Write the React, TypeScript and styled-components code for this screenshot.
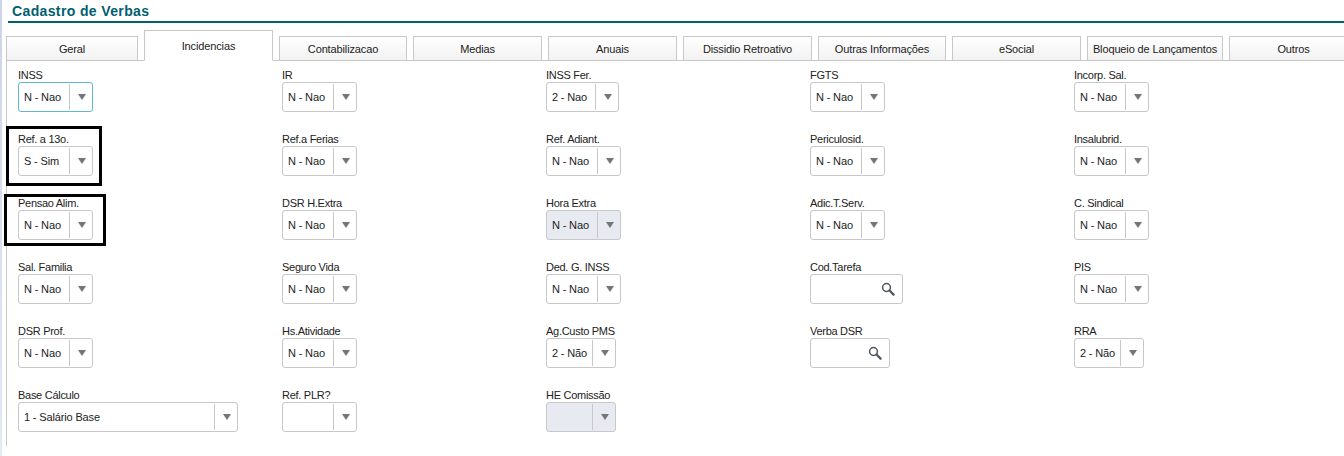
import React from 'react';
import styled, { createGlobalStyle } from 'styled-components';

const GlobalStyle = createGlobalStyle`
  html, body {
    margin: 0;
    padding: 0;
    background: #fff;
    overflow: hidden;
  }
  body {
    font-family: 'Liberation Sans', Arial, sans-serif;
    font-size: 11px;
    color: #222;
  }
`;

type FieldData = {
  label: string;
  value?: string;
  width?: number;
  disabled?: boolean;
  focused?: boolean;
  lookup?: boolean;
  mark?: 'first' | 'second';
};

const TABS = [
  { name: 'Geral', width: 132 },
  { name: 'Incidencias', width: 129, active: true },
  { name: 'Contabilizacao', width: 128 },
  { name: 'Medias', width: 129 },
  { name: 'Anuais', width: 129 },
  { name: 'Dissidio Retroativo', width: 129 },
  { name: 'Outras Informações', width: 128 },
  { name: 'eSocial', width: 129 },
  { name: 'Bloqueio de Lançamentos', width: 136 },
  { name: 'Outros', width: 129 },
];

const FIELDS: FieldData[] = [
  { label: 'INSS', value: 'N - Nao', focused: true },
  { label: 'IR', value: 'N - Nao' },
  { label: 'INSS Fer.', value: '2 - Nao', width: 73 },
  { label: 'FGTS', value: 'N - Nao' },
  { label: 'Incorp. Sal.', value: 'N - Nao' },

  { label: 'Ref. a 13o.', value: 'S - Sim', mark: 'first' },
  { label: 'Ref.a Ferias', value: 'N - Nao' },
  { label: 'Ref. Adiant.', value: 'N - Nao' },
  { label: 'Periculosid.', value: 'N - Nao' },
  { label: 'Insalubrid.', value: 'N - Nao' },

  { label: 'Pensao Alim.', value: 'N - Nao', mark: 'second' },
  { label: 'DSR H.Extra', value: 'N - Nao' },
  { label: 'Hora Extra', value: 'N - Nao', disabled: true },
  { label: 'Adic.T.Serv.', value: 'N - Nao' },
  { label: 'C. Sindical', value: 'N - Nao' },

  { label: 'Sal. Familia', value: 'N - Nao' },
  { label: 'Seguro Vida', value: 'N - Nao' },
  { label: 'Ded. G. INSS', value: 'N - Nao' },
  { label: 'Cod.Tarefa', lookup: true, width: 93 },
  { label: 'PIS', value: 'N - Nao' },

  { label: 'DSR Prof.', value: 'N - Nao' },
  { label: 'Hs.Atividade', value: 'N - Nao' },
  { label: 'Ag.Custo PMS', value: '2 - Não', width: 70 },
  { label: 'Verba DSR', lookup: true, width: 80 },
  { label: 'RRA', value: '2 - Não', width: 70 },

  { label: 'Base Cálculo', value: '1 - Salário Base', width: 220 },
  { label: 'Ref. PLR?', value: '' },
  { label: 'HE Comissão', value: '', width: 70, disabled: true },
];

const SearchIcon = () => (
  <svg width="14" height="14" viewBox="0 0 14 14">
    <circle cx="5.5" cy="5.5" r="3.9" fill="none" stroke="#4f555e" strokeWidth="1.5" />
    <path d="M8.5 8.5 L12.6 12.6" stroke="#4f555e" strokeWidth="2.2" strokeLinecap="round" />
  </svg>
);

const Field = ({ label, value, width = 75, disabled, focused, lookup, mark }: FieldData) => (
  <FieldWrap>
    {mark && <Highlight $mark={mark} />}
    <Label>{label}</Label>
    {lookup ? (
      <Control $width={width}>
        <Value />
        <SearchButton>
          <SearchIcon />
        </SearchButton>
      </Control>
    ) : (
      <Control $width={width} $disabled={disabled} $focused={focused}>
        <Value>{value}</Value>
        <ArrowButton>
          <Arrow />
        </ArrowButton>
      </Control>
    )}
  </FieldWrap>
);

export default function App() {
  return (
    <>
      <GlobalStyle />
      <Page>
        <Header>
          <Title>Cadastro de Verbas</Title>
        </Header>
        <Tabs>
          {TABS.map((tab) => (
            <Tab key={tab.name} $width={tab.width} $active={tab.active}>
              {tab.name}
            </Tab>
          ))}
        </Tabs>
        <Panel>
          <FieldGrid>
            {FIELDS.map((field) => (
              <Field key={field.label} {...field} />
            ))}
          </FieldGrid>
        </Panel>
      </Page>
    </>
  );
}

const Page = styled.div`
  width: 1344px;
  height: 456px;
  overflow: hidden;
  background: linear-gradient(#cbd5e7, #e2eaf6) left top / 2px 100% no-repeat;
`;

const Header = styled.div`
  margin-left: 8px;
  padding-left: 4px;
  height: 23px;
  box-sizing: border-box;
  border-bottom: 2px solid #00606f;
`;

const Title = styled.h1`
  margin: 0;
  padding-top: 3px;
  font-size: 14px;
  line-height: 16px;
  font-weight: bold;
  color: #00606f;
  letter-spacing: 0.37px;
`;

const Tabs = styled.div`
  display: flex;
  align-items: flex-end;
  gap: 6px;
  height: 37px;
  padding-left: 6px;
  white-space: nowrap;
`;

const Tab = styled.div<{ $width: number; $active?: boolean }>`
  position: relative;
  flex: 0 0 ${(p) => p.$width}px;
  box-sizing: border-box;
  height: ${(p) => (p.$active ? 31 : 24)}px;
  margin-bottom: ${(p) => (p.$active ? -1 : 0)}px;
  display: flex;
  justify-content: center;
  align-items: center;
  border: 1px solid #c8c8c8;
  border-bottom: ${(p) => (p.$active ? '1px solid #fff' : 'none')};
  background: ${(p) => (p.$active ? '#fff' : 'linear-gradient(#fff, #f2f2f2)')};
  color: #222;
  font-size: 11px;
  letter-spacing: -0.13px;
`;

const Panel = styled.div`
  margin-left: 6px;
  height: 386px;
  box-sizing: border-box;
  border-top: 1px solid #c8c8c8;
  border-left: 1px solid #c8c8c8;
  padding: 7px 0 0 11px;
`;

const FieldGrid = styled.div`
  display: grid;
  grid-template-columns: repeat(5, 264px);
  grid-auto-rows: 64px;
`;

const FieldWrap = styled.div`
  position: relative;
  display: flex;
  flex-direction: column;
  align-items: flex-start;
`;

const Label = styled.label`
  height: 14px;
  line-height: 14px;
  font-size: 11px;
  letter-spacing: -0.28px;
  color: #222;
`;

const Control = styled.div<{ $width: number; $disabled?: boolean; $focused?: boolean }>`
  width: ${(p) => p.$width}px;
  height: 30px;
  box-sizing: border-box;
  display: flex;
  align-items: stretch;
  border: 1px solid ${(p) => (p.$focused ? '#5fb8d0' : '#c8c8c8')};
  border-radius: 3px;
  background: ${(p) => (p.$disabled ? '#e7eaf1' : '#fff')};
`;

const Value = styled.div`
  flex: 1;
  min-width: 0;
  padding-left: 5px;
  line-height: 28px;
  font-size: 11px;
  letter-spacing: -0.15px;
  white-space: nowrap;
  overflow: hidden;
  color: #222;
`;

const ArrowButton = styled.div`
  flex: 0 0 23px;
  box-sizing: border-box;
  margin: 1px 0;
  padding-left: 2px;
  border-left: 1px solid #c8c8c8;
  display: flex;
  align-items: center;
  justify-content: center;
`;

const Arrow = styled.span`
  width: 0;
  height: 0;
  border-left: 4px solid transparent;
  border-right: 4px solid transparent;
  border-top: 6px solid #73767f;
`;

const SearchButton = styled.div`
  flex: 0 0 26px;
  display: flex;
  align-items: center;
  justify-content: center;
  padding-right: 3px;
  box-sizing: border-box;
`;

const Highlight = styled.div<{ $mark: 'first' | 'second' }>`
  position: absolute;
  box-sizing: border-box;
  border: 3px solid #000;
  pointer-events: none;
  left: ${(p) => (p.$mark === 'first' ? -12 : -14)}px;
  top: ${(p) => (p.$mark === 'first' ? -6 : -2)}px;
  width: ${(p) => (p.$mark === 'first' ? 96 : 102)}px;
  height: ${(p) => (p.$mark === 'first' ? 60 : 52)}px;
`;
